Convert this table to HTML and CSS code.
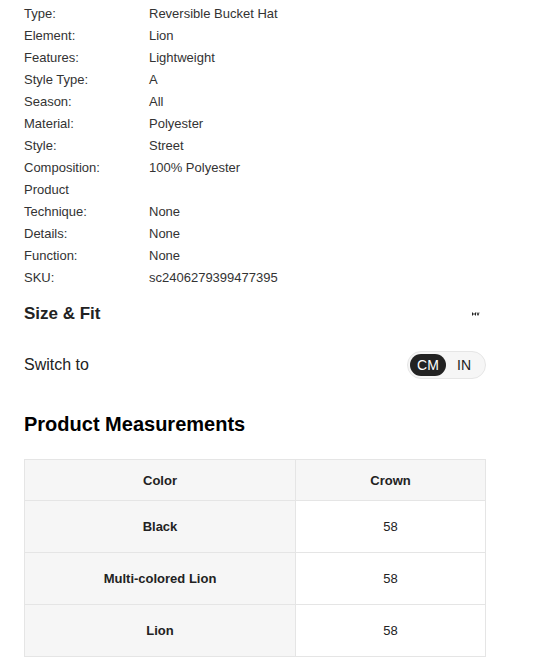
FILE: index.html
```html
<!DOCTYPE html>
<html>
<head>
<meta charset="utf-8">
<link rel="stylesheet" href="styles.css">
</head>
<body>
<div class="page">
  <div class="attrs">
    <div class="row"><span class="k">Type:</span><span class="v">Reversible Bucket Hat</span></div>
    <div class="row"><span class="k">Element:</span><span class="v">Lion</span></div>
    <div class="row"><span class="k">Features:</span><span class="v">Lightweight</span></div>
    <div class="row"><span class="k">Style Type:</span><span class="v">A</span></div>
    <div class="row"><span class="k">Season:</span><span class="v">All</span></div>
    <div class="row"><span class="k">Material:</span><span class="v">Polyester</span></div>
    <div class="row"><span class="k">Style:</span><span class="v">Street</span></div>
    <div class="row"><span class="k">Composition:</span><span class="v">100% Polyester</span></div>
    <div class="row"><span class="k">Product</span><span class="v"></span></div>
    <div class="row"><span class="k">Technique:</span><span class="v">None</span></div>
    <div class="row"><span class="k">Details:</span><span class="v">None</span></div>
    <div class="row"><span class="k">Function:</span><span class="v">None</span></div>
    <div class="row"><span class="k">SKU:</span><span class="v">sc2406279399477395</span></div>
  </div>

  <div class="fit-head">
    <h2 class="fit-title">Size &amp; Fit</h2>
    <svg class="fit-icon" width="8" height="4" viewBox="0 0 8 4"><path d="M0 0.5h1v3h-1zM1 1.5h2v1h-2zM3 0.5h1v3h-1zM4.5 0.5h1l0.5 2l0.5-2h1l-1 3h-1z" fill="#222"/></svg>
  </div>

  <div class="switch-row">
    <span class="switch-label">Switch to</span>
    <div class="toggle">
      <span class="opt active">CM</span>
      <span class="opt">IN</span>
    </div>
  </div>

  <h2 class="pm-title">Product Measurements</h2>

  <table class="meas">
    <thead>
      <tr><th>Color</th><th>Crown</th></tr>
    </thead>
    <tbody>
      <tr><td class="c">Black</td><td>58</td></tr>
      <tr><td class="c">Multi-colored Lion</td><td>58</td></tr>
      <tr><td class="c">Lion</td><td>58</td></tr>
    </tbody>
  </table>
</div>
</body>
</html>
```

FILE: styles.css
```css
html, body {
  margin: 0;
  padding: 0;
  background: #fff;
}
body {
  font-family: "Liberation Sans", Arial, sans-serif;
  color: #222;
  -webkit-font-smoothing: none;
}
.page {
  width: 462px;
  padding: 3px 0 0 24px;
}
.attrs {
  display: flex;
  flex-direction: column;
}
.row {
  display: flex;
  height: 22px;
  line-height: 22px;
  font-size: 13px;
  color: #333;
}
.k {
  width: 125px;
  flex: none;
}
.v {
  flex: 1;
}
.fit-head {
  display: flex;
  align-items: center;
  justify-content: space-between;
  margin-top: 13px;
  height: 24px;
}
.fit-title {
  margin: 0;
  font-size: 17px;
  font-weight: bold;
  color: #222;
}
.fit-icon {
  display: block;
  margin-right: 6px;
}
.switch-row {
  display: flex;
  align-items: center;
  justify-content: space-between;
  margin-top: 25px;
}
.switch-label {
  font-size: 16px;
  color: #222;
}
.toggle {
  display: flex;
  align-items: center;
  height: 26px;
  padding: 0 2px;
  border: 1px solid #e6e6e6;
  border-radius: 15px;
  background: #f6f6f6;
}
.opt {
  display: flex;
  align-items: center;
  justify-content: center;
  height: 22px;
  font-size: 14px;
  color: #222;
  border-radius: 11px;
}
.opt.active {
  background: #222;
  color: #fff;
  width: 36px;
}
.opt:last-child {
  padding: 0 12px 0 11px;
}
.pm-title {
  margin: 33px 0 0;
  font-size: 20px;
  font-weight: bold;
  line-height: 24px;
  color: #000;
}
.meas {
  margin-top: 23px;
  width: 462px;
  border-collapse: collapse;
  font-size: 13px;
}
.meas th, .meas td {
  border: 1px solid #e5e5e5;
  text-align: center;
  color: #222;
}
.meas th {
  height: 40px;
  padding: 0;
  background: #f6f6f6;
  font-weight: bold;
}
.meas th:first-child, .meas td.c {
  width: 270px;
}
.meas td {
  height: 51px;
  padding: 0;
  background: #fff;
}
.meas td.c {
  background: #f6f6f6;
  font-weight: bold;
}
```
